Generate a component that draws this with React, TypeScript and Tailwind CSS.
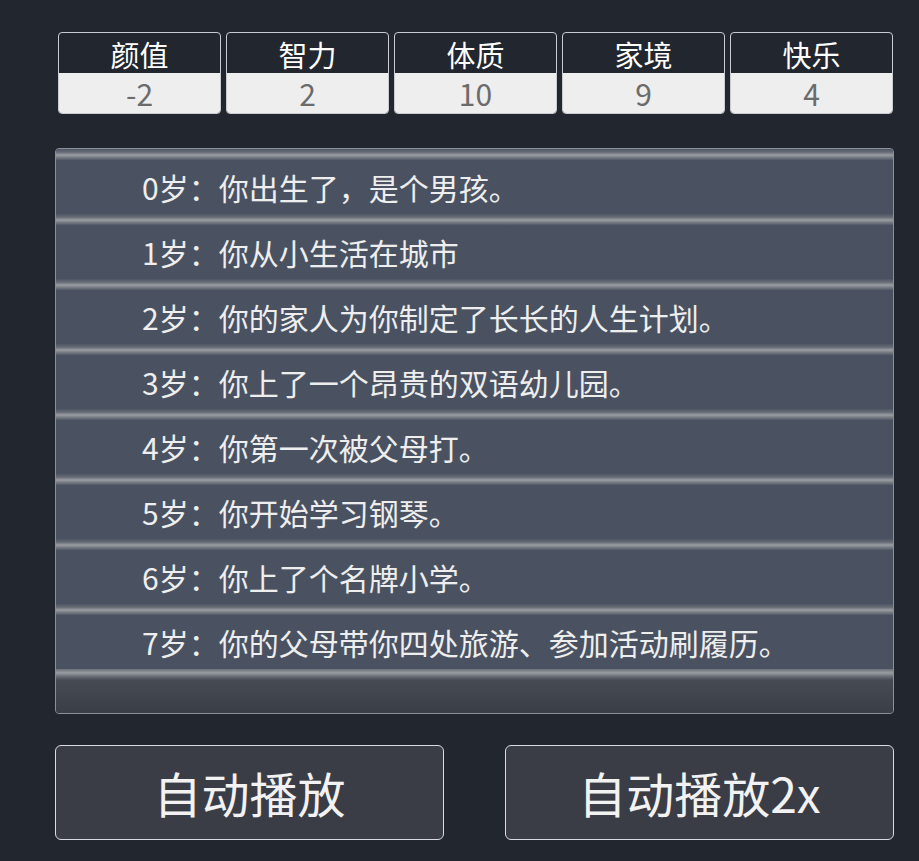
import React from 'react';

const stats = [
    { label: '颜值', value: '-2' },
    { label: '智力', value: '2' },
    { label: '体质', value: '10' },
    { label: '家境', value: '9' },
    { label: '快乐', value: '4' },
];

const events = [
    '0岁：你出生了，是个男孩。',
    '1岁：你从小生活在城市',
    '2岁：你的家人为你制定了长长的人生计划。',
    '3岁：你上了一个昂贵的双语幼儿园。',
    '4岁：你第一次被父母打。',
    '5岁：你开始学习钢琴。',
    '6岁：你上了个名牌小学。',
    '7岁：你的父母带你四处旅游、参加活动刷履历。',
];

const font = { fontFamily: '"Noto Sans CJK SC", "Noto Sans", sans-serif' };

export default function App() {
    return (
        <div className="min-h-screen bg-[#22262e] pl-[55px] pt-[32px]" style={font}>
            <div className="w-[839px]">
                {/* Stats */}
                <div className="flex gap-[5px] pl-[3px]">
                    {stats.map((s) => (
                        <div key={s.label} className="w-[163px] shrink-0 h-[82px] rounded-[4px] border border-[#c9cbd0] overflow-hidden flex flex-col">
                            <div className="h-[40px] flex items-center justify-center text-[29px] leading-[40px] text-white pt-[2px]">{s.label}</div>
                            <div className="h-[40px] bg-[#eeeeee] flex items-center justify-center text-[30px] leading-[40px] text-[#6b6b6b]">{s.value}</div>
                        </div>
                    ))}
                </div>

                {/* Event log */}
                <div className="mt-[34px] h-[566px] rounded-[4px] border border-[#8b8f96] bg-[#3b3f48] overflow-hidden flex flex-col">
                    {events.map((e) => (
                        <div key={e} className="flex flex-col">
                            <div className="h-[11px] bg-[linear-gradient(to_bottom,#4f5665_0%,#686d77_30%,#9b9ea3_55%,#7d8189_72%,#535a67_100%)]" />
                            <div className="h-[54px] bg-[#4a5261] flex items-center pl-[86px] text-[30px] leading-none text-[#eeeeee] whitespace-nowrap">{e}</div>
                        </div>
                    ))}
                    <div className="h-[11px] bg-[linear-gradient(to_bottom,#6a6f78_0%,#9a9da2_35%,#6d717a_65%,#474b54_100%)]" />
                    <div className="flex-1 bg-[linear-gradient(to_bottom,#464a53,#3a3e47)]" />
                </div>

                {/* Buttons */}
                <div className="mt-[31px] flex justify-between">
                    <button className="w-[389px] h-[95px] rounded-[6px] border border-[#d9dbe0] bg-[#3a3d46] text-[48px] leading-none text-[#f2f2f2] flex items-center justify-center pb-[2px]">自动播放</button>
                    <button className="w-[389px] h-[95px] rounded-[6px] border border-[#d9dbe0] bg-[#3a3d46] text-[48px] leading-none text-[#f2f2f2] flex items-center justify-center pb-[2px]">自动播放2x</button>
                </div>
            </div>
        </div>
    );
}
